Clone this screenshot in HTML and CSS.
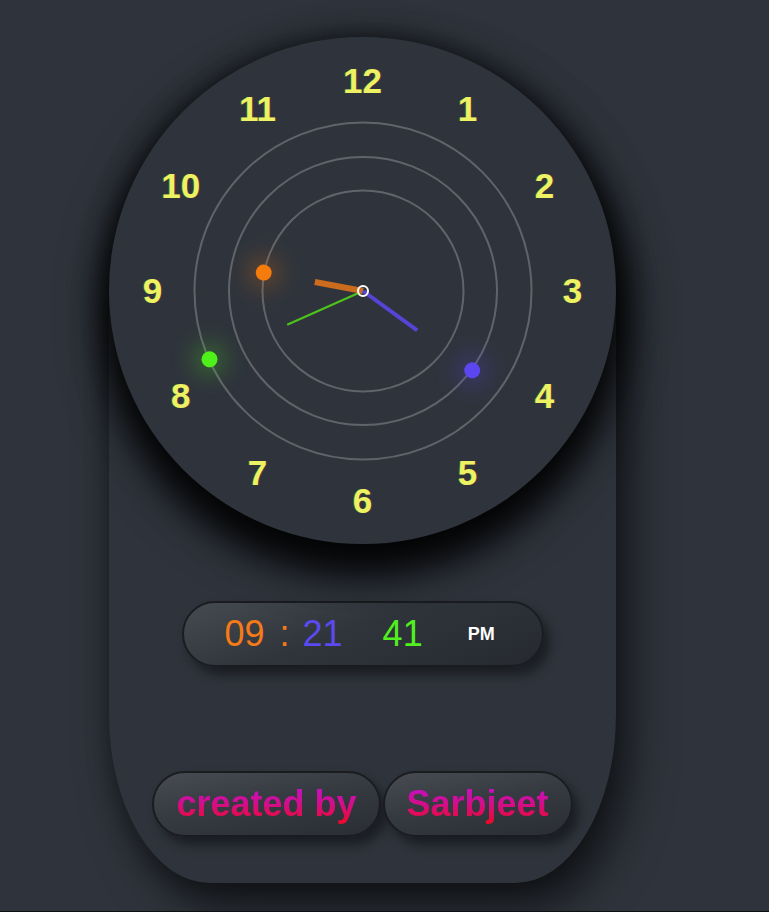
FILE: index.html
```html
<!DOCTYPE html>
<html lang="en">
<head>
<meta charset="utf-8">
<title>Clock</title>
<link rel="stylesheet" href="styles.css">
</head>
<body>
<main class="card">
  <div class="clock">
    <div class="ring ring-1"></div>
    <div class="ring ring-2"></div>
    <div class="ring ring-3"></div>

    <span class="num" style="--i:0">12</span>
    <span class="num" style="--i:1">1</span>
    <span class="num" style="--i:2">2</span>
    <span class="num" style="--i:3">3</span>
    <span class="num" style="--i:4">4</span>
    <span class="num" style="--i:5">5</span>
    <span class="num" style="--i:6">6</span>
    <span class="num" style="--i:7">7</span>
    <span class="num" style="--i:8">8</span>
    <span class="num" style="--i:9">9</span>
    <span class="num" style="--i:10">10</span>
    <span class="num" style="--i:11">11</span>

    <div class="dot dot-hour" style="--a:280.5deg"></div>
    <div class="dot dot-min" style="--a:126deg"></div>
    <div class="dot dot-sec" style="--a:246deg"></div>

    <div class="hand hand-sec" style="--a:246deg"></div>
    <div class="hand hand-hour" style="--a:280.5deg"></div>
    <div class="hand hand-min" style="--a:126deg"></div>
    <div class="pivot"></div>
  </div>

  <div class="digital">
    <span class="d-hour">09</span>
    <span class="d-colon">:</span>
    <span class="d-min">21</span>
    <span class="d-sec">41</span>
    <span class="d-ampm">PM</span>
  </div>

  <div class="credits">
    <div class="pill"><span class="grad">created by</span></div>
    <div class="pill"><span class="grad">Sarbjeet</span></div>
  </div>
</main>
</body>
</html>
```

FILE: styles.css
```css
html {
  background: #0e1012;
}

body {
  margin: 0;
  min-height: 911px;
  box-sizing: border-box;
  padding: 37px 0 0 109px;
  background: #2f343c;
  font-family: "Liberation Sans", Arial, sans-serif;
}

.card {
  width: 507px;
  height: 846px;
  border-radius: 253px 253px 101px 101px / 253px 253px 169px 169px;
  background: #2f343c;
  box-shadow: 14px 24px 45px rgba(0, 0, 0, 0.62), -4px 6px 22px rgba(0, 0, 0, 0.22);
  display: flex;
  flex-direction: column;
  align-items: center;
}

/* ---------- analog clock ---------- */
.clock {
  flex: none;
  position: relative;
  width: 507px;
  height: 507px;
  border-radius: 50%;
  background: #2f343c;
  box-shadow: 0 28px 34px rgba(0, 0, 0, 0.7), 0 22px 50px rgba(0, 0, 0, 0.8), 0 0 28px rgba(0, 0, 0, 0.35);
}

.ring {
  position: absolute;
  left: 50%;
  top: 50%;
  border: 2px solid rgba(255, 255, 255, 0.24);
  border-radius: 50%;
  box-sizing: border-box;
  transform: translate(-50%, -50%);
}
.ring-1 { width: 203px; height: 203px; }
.ring-2 { width: 270px; height: 270px; }
.ring-3 { width: 339px; height: 339px; }

.num {
  position: absolute;
  left: 50%;
  top: 50%;
  width: 60px;
  height: 40px;
  margin: -20px 0 0 -30px;
  display: flex;
  align-items: center;
  justify-content: center;
  font-size: 35px;
  font-weight: bold;
  line-height: 1;
  color: #edf262;
  text-shadow: -1px 0 rgba(70, 210, 60, 0.25), 1px 0 rgba(220, 50, 40, 0.25);
  transform: rotate(calc(var(--i) * 30deg)) translateY(-210px) rotate(calc(var(--i) * -30deg));
}

.dot {
  position: absolute;
  left: 50%;
  top: 50%;
  width: 16px;
  height: 16px;
  margin: -8px 0 0 -8px;
  border-radius: 50%;
  transform: rotate(var(--a)) translateY(calc(var(--r) * -1));
}
.dot-hour { --r: 101px; background: #f57b0d; box-shadow: 0 0 24px 6px rgba(245, 123, 13, 0.35); }
.dot-min  { --r: 135px; background: #5b47f0; box-shadow: 0 0 24px 6px rgba(91, 71, 240, 0.35); }
.dot-sec  { --r: 168px; background: #4ff01a; box-shadow: 0 0 24px 6px rgba(79, 240, 26, 0.35); }

.hand {
  position: absolute;
  left: 50%;
  bottom: 50%;
  transform-origin: 50% 100%;
  transform: translateX(-50%) rotate(var(--a));
}
.hand-hour { width: 6px; height: 49px; background: #cb6b1e; }
.hand-min  { width: 4px; height: 67px; background: #5445d6; }
.hand-sec  { width: 2px; height: 83px; background: #4ec41b; }

.pivot {
  position: absolute;
  left: 50%;
  top: 50%;
  width: 12px;
  height: 12px;
  margin: -6px 0 0 -6px;
  box-sizing: border-box;
  border: 2px solid #ffffff;
  border-radius: 50%;
}

/* ---------- digital readout ---------- */
.digital {
  flex: none;
  margin-top: 57px;
  width: 362px;
  height: 66px;
  box-sizing: border-box;
  padding-left: 41px;
  border: 2px solid #1a1c20;
  border-radius: 33px;
  background: linear-gradient(160deg, #464a51 0%, #30343b 45%, #262a30 100%);
  box-shadow: 6px 8px 12px rgba(0, 0, 0, 0.45);
  display: flex;
  align-items: center;
  font-size: 36px;
  line-height: 1;
}
.d-hour  { color: #f57a18; }
.d-colon { color: #f57a18; margin-left: 15px; }
.d-min   { color: #5b4af0; margin-left: 13px; }
.d-sec   { color: #52f01f; margin-left: 40px; }
.d-ampm  { color: #ffffff; margin-left: 45px; font-size: 18px; font-weight: bold; }

/* ---------- credits ---------- */
.credits {
  flex: none;
  margin-top: 104px;
  display: flex;
  gap: 2px;
}

.pill {
  height: 66px;
  box-sizing: border-box;
  padding: 0 22px;
  border: 2px solid #1a1c20;
  border-radius: 33px;
  background: linear-gradient(170deg, #484b52 0%, #363a41 45%, #2a2e34 100%);
  box-shadow: 6px 8px 12px rgba(0, 0, 0, 0.45);
  display: flex;
  align-items: center;
  font-size: 36px;
  font-weight: bold;
}

.grad {
  line-height: 1.15;
  background: linear-gradient(to bottom, #c010d4 0%, #d40e8a 50%, #f00820 100%);
  -webkit-background-clip: text;
  background-clip: text;
  color: transparent;
}
```
